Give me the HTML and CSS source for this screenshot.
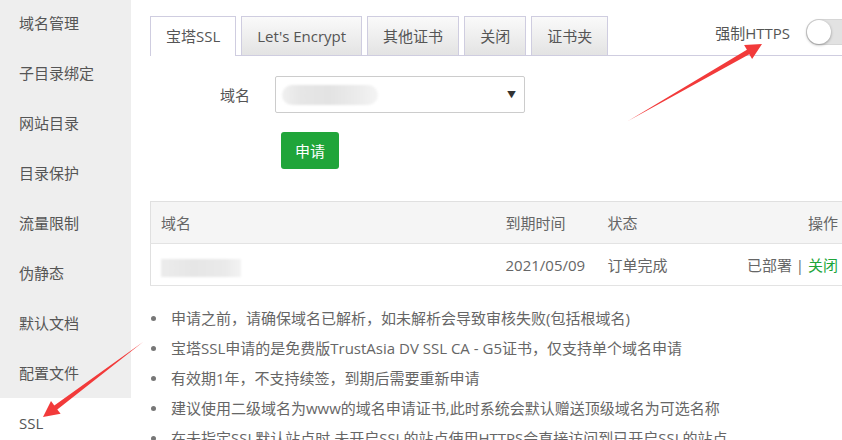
FILE: index.html
```html
<!DOCTYPE html>
<html lang="zh-CN">
<head>
<meta charset="utf-8">
<link rel="stylesheet" href="styles.css">
</head>
<body>
<div class="page">
  <nav class="sidebar">
    <div class="nav-item">域名管理</div>
    <div class="nav-item">子目录绑定</div>
    <div class="nav-item">网站目录</div>
    <div class="nav-item">目录保护</div>
    <div class="nav-item">流量限制</div>
    <div class="nav-item">伪静态</div>
    <div class="nav-item">默认文档</div>
    <div class="nav-item">配置文件</div>
    <div class="nav-item active">SSL</div>
  </nav>
  <main class="main">
    <div class="tabbar">
      <div class="tab active">宝塔SSL</div>
      <div class="tab">Let's Encrypt</div>
      <div class="tab">其他证书</div>
      <div class="tab">关闭</div>
      <div class="tab">证书夹</div>
      <div class="force">
        <span class="force-label">强制HTTPS</span>
        <span class="switch"><span class="knob"></span></span>
      </div>
    </div>
    <div class="form-row">
      <label class="label">域名</label>
      <div class="select">
        <span class="blur-text"></span>
        <span class="caret">▼</span>
      </div>
    </div>
    <div class="btn-row">
      <button class="btn">申请</button>
    </div>
    <table class="table">
      <thead>
        <tr>
          <th class="c-name">域名</th>
          <th class="c-date">到期时间</th>
          <th class="c-status">状态</th>
          <th class="c-op">操作</th>
        </tr>
      </thead>
      <tbody>
        <tr>
          <td class="c-name"><span class="blur-cell"></span></td>
          <td class="c-date">2021/05/09</td>
          <td class="c-status">订单完成</td>
          <td class="c-op">已部署 | <a class="green">关闭</a></td>
        </tr>
      </tbody>
    </table>
    <ul class="tips">
      <li>申请之前，请确保域名已解析，如未解析会导致审核失败(包括根域名)</li>
      <li>宝塔SSL申请的是免费版TrustAsia DV SSL CA - G5证书，仅支持单个域名申请</li>
      <li>有效期1年，不支持续签，到期后需要重新申请</li>
      <li>建议使用二级域名为www的域名申请证书,此时系统会默认赠送顶级域名为可选名称</li>
      <li>在未指定SSL默认站点时,未开启SSL的站点使用HTTPS会直接访问到已开启SSL的站点</li>
    </ul>
  </main>
</div>
<svg class="arrows" width="842" height="440" viewBox="0 0 842 440">
  <polygon fill="#f23a3a" points="628,121 749.3,54.2 752.1,58.9 762,44 744.1,45.1 746.9,49.8"/>
  <polygon fill="#f23a3a" points="143,342 57.3,409.4 60.6,413.8 43,417 51,401 54.3,405.4"/>
</svg>
</body>
</html>
```

FILE: styles.css
```css
* { box-sizing: border-box; }
html, body {
  margin: 0;
  padding: 0;
  width: 842px;
  height: 440px;
  overflow: hidden;
  background: #fff;
}
body {
  font-family: "Open Sans", "Noto Sans CJK SC", sans-serif;
  font-size: 15px;
  color: #555;
  position: relative;
}
.page {
  display: flex;
  width: 842px;
  height: 440px;
}
.sidebar {
  width: 131px;
  flex: none;
  margin-top: -2px;
}
.nav-item {
  height: 50px;
  line-height: 50px;
  padding-left: 19px;
  background: #eee;
  color: #555;
}
.nav-item.active {
  background: #fff;
}
.main {
  flex: 1;
  padding: 16px 0 0 19px;
  min-width: 0;
}
.tabbar {
  display: flex;
  align-items: flex-end;
  border-bottom: 1px solid #cfcde0;
  height: 40px;
}
.tab {
  height: 39px;
  line-height: 38px;
  padding: 0 15px;
  margin-right: 5px;
  border: 1px solid #cfcde0;
  border-bottom: none;
  background: linear-gradient(#fafafa, #e3e3e3);
  color: #555;
  white-space: nowrap;
}
.tab.active {
  background: #fff;
  height: 40px;
  margin-bottom: -1px;
}
.force {
  margin-left: auto;
  align-self: flex-start;
  display: flex;
  align-items: center;
  margin-top: 3px;
  margin-right: -14px;
  white-space: nowrap;
}
.force-label {
  color: #555;
  margin-right: 16px;
}
.switch {
  width: 50px;
  height: 26px;
  border-radius: 13px;
  background: #e2e2e2;
  box-shadow: inset 0 0 0 1px #d6d6d6;
  position: relative;
  display: inline-block;
}
.knob {
  position: absolute;
  left: 1px;
  top: 1px;
  width: 24px;
  height: 24px;
  border-radius: 50%;
  background: #fff;
  box-shadow: 0 1px 3px rgba(0,0,0,0.35);
}
.form-row {
  display: flex;
  align-items: center;
  margin-top: 20px;
}
.label {
  width: 100px;
  text-align: right;
  color: #555;
  margin-right: 25px;
}
.select {
  width: 250px;
  height: 37px;
  border: 1px solid #ccc;
  border-radius: 2px;
  display: flex;
  align-items: center;
  padding: 0 8px 0 6px;
}
.blur-text {
  width: 96px;
  height: 20px;
  border-radius: 10px;
  background: linear-gradient(90deg, #f0f0f0 0%, #e6e6e6 20%, #e3e3e3 50%, #ececec 80%, #f4f4f4 100%);
  filter: blur(1px);
}
.caret {
  margin-left: auto;
  font-size: 9px;
  color: #333;
}
.btn-row {
  margin-top: 19px;
  padding-left: 131px;
}
.btn {
  width: 58px;
  height: 37px;
  border: none;
  border-radius: 3px;
  background: #20a53a;
  color: #fff;
  font-family: "Open Sans", "Noto Sans CJK SC", sans-serif;
  font-size: 15px;
  padding: 0;
}
.table {
  margin-top: 32px;
  width: 692px;
  border-collapse: collapse;
  color: #666;
}
.table th, .table td {
  height: 42px;
  padding: 0;
  text-align: left;
  font-weight: normal;
  border-bottom: 1px solid #e3e3e3;
}
.table thead tr {
  background: #f5f5f5;
  border-top: 1px solid #e0e0e0;
}
.table tr {
  border-left: 1px solid #e0e0e0;
}
.c-name { padding-left: 10px !important; width: 355px; }
.c-date { width: 102px; }
.c-status { width: 120px; }
.c-op { text-align: right !important; padding-right: 4px !important; }
.blur-cell {
  display: inline-block;
  width: 80px;
  height: 18px;
  margin-top: 6px;
  background: linear-gradient(90deg, #ececec, #e6e6e6 40%, #eaeaea 80%, #f3f3f3);
  filter: blur(0.8px);
  vertical-align: middle;
}
.green { color: #20a53a; }
.tips {
  list-style: none;
  margin: 17px 0 0 0;
  padding: 0;
  color: #666;
  white-space: nowrap;
}
.tips li {
  line-height: 30px;
  position: relative;
  padding-left: 21px;
}
.tips li::before {
  content: "";
  position: absolute;
  left: 1px;
  top: 13px;
  width: 5px;
  height: 5px;
  border-radius: 50%;
  background: #777;
}
.arrows {
  position: absolute;
  left: 0;
  top: 0;
  pointer-events: none;
}
```
